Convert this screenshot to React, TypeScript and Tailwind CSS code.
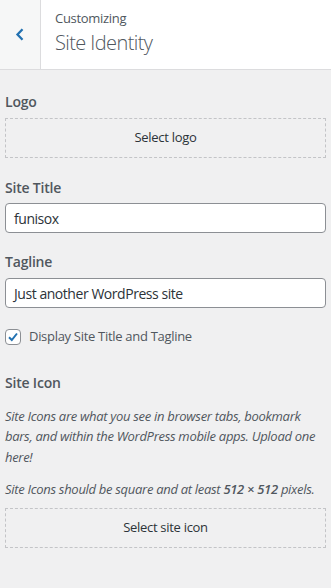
import React from 'react';

const font = { fontFamily: '"Open Sans", "Noto Sans", sans-serif' };

function DashedButton({ label }: { label: string }) {
  return (
    <div className="mx-[5px] h-[40px] border border-dashed border-[#c3c4c7] flex items-center justify-center text-[13px] tracking-[-0.3px] text-[#2c3338]">
      {label}
    </div>
  );
}

function Label({ children }: { children: React.ReactNode }) {
  return <div className="px-[5px] text-[14px] font-semibold tracking-[-0.2px] text-[#50575e] leading-[20px]">{children}</div>;
}

function TextInput({ value }: { value: string }) {
  return (
    <div className="mx-[5px] h-[30px] bg-white border border-[#8c8f94] rounded-[4px] flex items-center px-[8px] text-[14px] tracking-[-0.45px] text-[#2c3338]">
      {value}
    </div>
  );
}

export default function App() {
  return (
    <div className="w-[331px] h-[588px] bg-[#f0f0f1] overflow-hidden" style={font}>
      {/* Header */}
      <div className="h-[70px] bg-white border-b border-[#dcdcde] flex">
        <div className="w-[41px] bg-[#f6f7f7] border-r border-[#dcdcde] flex items-center justify-center">
          <svg width="10" height="13" viewBox="0 0 10 13">
            <path d="M7.5 1.3 L2.5 6.5 L7.5 11.7" fill="none" stroke="#2271b1" strokeWidth="2.3" />
          </svg>
        </div>
        <div className="pl-[14px] pt-[9px] flex flex-col">
          <span className="text-[13px] tracking-[-0.3px] text-[#50575e] leading-[18px]">Customizing</span>
          <span className="text-[20px] font-light tracking-[-0.6px] text-[#50575e] leading-[28px] mt-[2px]">Site Identity</span>
        </div>
      </div>

      <div className="pt-[22px]">
        <Label>Logo</Label>
        <div className="mt-[6px]">
          <DashedButton label="Select logo" />
        </div>

        <div className="mt-[20px]">
          <Label>Site Title</Label>
        </div>
        <div className="mt-[5px]">
          <TextInput value="funisox" />
        </div>

        <div className="mt-[19px]">
          <Label>Tagline</Label>
        </div>
        <div className="mt-[6px]">
          <TextInput value="Just another WordPress site" />
        </div>

        <div className="mt-[19px] px-[5px] flex items-center gap-[8px]">
          <div className="w-[16px] h-[16px] bg-white border border-[#8c8f94] rounded-[4px] flex items-center justify-center">
            <svg width="14" height="14" viewBox="0 0 14 14">
              <path d="M3 7.2 L5.8 10 L11 3.5" fill="none" stroke="#2271b1" strokeWidth="2" />
            </svg>
          </div>
          <span className="text-[13px] tracking-[-0.3px] text-[#50575e]">Display Site Title and Tagline</span>
        </div>

        <div className="mt-[26px]">
          <Label>Site Icon</Label>
        </div>
        <p className="mt-[13px] px-[5px] text-[13px] italic tracking-[-0.3px] text-[#50575e] leading-[20.5px]">
          Site Icons are what you see in browser tabs, bookmark bars, and within the WordPress mobile apps. Upload one here!
        </p>
        <p className="mt-[12px] px-[5px] text-[13px] italic tracking-[-0.3px] text-[#50575e] leading-[20.5px]">
          Site Icons should be square and at least <strong className="font-semibold">512 × 512</strong> pixels.
        </p>
        <div className="mt-[8px]">
          <DashedButton label="Select site icon" />
        </div>
      </div>
    </div>
  );
}
